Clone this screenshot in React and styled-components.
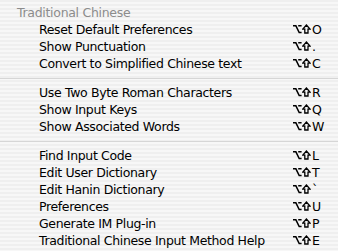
import React from "react";
import styled, { createGlobalStyle } from "styled-components";

const GlobalStyle = createGlobalStyle`
  html, body {
    margin: 0;
    padding: 0;
  }
  body {
    font-family: "DejaVu Sans", "Liberation Sans", sans-serif;
    -webkit-font-smoothing: antialiased;
  }
`;

const Menu = styled.div`
  width: 338px;
  height: 251px;
  box-sizing: border-box;
  padding-top: 4px;
  overflow: hidden;
  background: repeating-linear-gradient(
    to bottom,
    #efefef 0px,
    #efefef 2px,
    #f7f7f7 2px,
    #f7f7f7 4px
  );
`;

const Header = styled.div`
  height: 17px;
  line-height: 17px;
  padding-left: 17px;
  font-size: 12.5px;
  color: #8c8c8c;
  letter-spacing: -0.3px;
`;

const Row = styled.div`
  display: flex;
  align-items: center;
  height: 17px;
  line-height: 17px;
  padding-left: 39px;
  font-size: 12.5px;
  color: #000;
`;

const Label = styled.span`
  flex: 1;
  white-space: nowrap;
  letter-spacing: -0.35px;
`;

const Shortcut = styled.span`
  display: flex;
  align-items: center;
  width: 45px;
`;

const Glyph = styled.svg`
  width: 9px;
  height: 10px;
  margin-top: -1px;
  flex: none;
`;

const Key = styled.span`
  margin-left: 1px;
  font-size: 12.5px;
`;

const Separator = styled.div`
  height: 12px;
  display: flex;
  align-items: center;
  &::after {
    content: "";
    flex: 1;
    height: 1px;
    background: #d6d6d6;
  }
`;

const OptionIcon = () => (
  <Glyph viewBox="0 0 9 10">
    <path
      d="M0 1.8 H2.9 L6.2 8.6 H8.6 M5.2 1.8 H8.6"
      fill="none"
      stroke="#000"
      strokeWidth="1.5"
    />
  </Glyph>
);

const ShiftIcon = () => (
  <Glyph viewBox="0 0 9 10">
    <path
      d="M4.4 1 L8 5.1 H6 V9 H2.8 V5.1 H0.8 Z"
      fill="none"
      stroke="#000"
      strokeWidth="1.3"
    />
  </Glyph>
);

const groups = [
  [
    ["Reset Default Preferences", "O"],
    ["Show Punctuation", "."],
    ["Convert to Simplified Chinese text", "C"],
  ],
  [
    ["Use Two Byte Roman Characters", "R"],
    ["Show Input Keys", "Q"],
    ["Show Associated Words", "W"],
  ],
  [
    ["Find Input Code", "L"],
    ["Edit User Dictionary", "T"],
    ["Edit Hanin Dictionary", "`"],
    ["Preferences", "U"],
    ["Generate IM Plug-in", "P"],
    ["Traditional Chinese Input Method Help", "E"],
  ],
];

export default function App() {
  return (
    <>
      <GlobalStyle />
      <Menu>
        <Header>Traditional Chinese</Header>
        {groups.map((items, gi) => (
          <React.Fragment key={gi}>
            {gi > 0 && <Separator />}
            {items.map(([label, key]) => (
              <Row key={label}>
                <Label>{label}</Label>
                <Shortcut>
                  <OptionIcon />
                  <ShiftIcon />
                  <Key>{key}</Key>
                </Shortcut>
              </Row>
            ))}
          </React.Fragment>
        ))}
      </Menu>
    </>
  );
}
